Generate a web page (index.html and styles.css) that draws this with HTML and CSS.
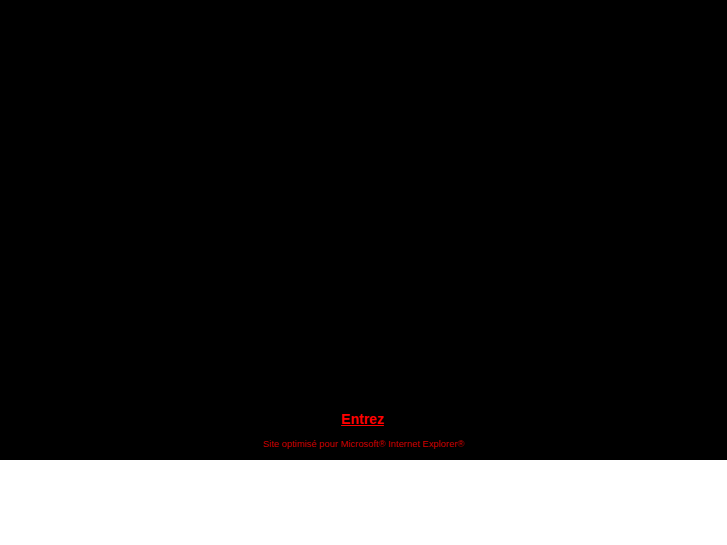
FILE: index.html
```html
<!DOCTYPE html>
<html lang="fr">
<head>
<meta charset="utf-8">
<title>Entrez</title>
<link rel="stylesheet" href="styles.css">
</head>
<body>
<div class="stage">
  <a class="enter" href="#">Entrez</a>
  <p class="note">Site optimisé pour Microsoft® Internet Explorer®</p>
</div>
</body>
</html>
```
FILE: styles.css
```css
html, body {
  margin: 0;
  padding: 0;
  background: #ffffff;
  font-family: "Liberation Sans", Arial, sans-serif;
}
.stage {
  height: 460px;
  background: #000000;
  display: flex;
  flex-direction: column;
  align-items: center;
  justify-content: flex-end;
  padding-bottom: 10px;
  box-sizing: border-box;
}
.enter {
  display: block;
  font-size: 14px;
  line-height: 16px;
  font-weight: bold;
  color: #ff0000;
  text-decoration: underline;
  margin-right: 2px;
}
.note {
  margin: 11px 0 0 0;
  font-size: 9.4px;
  line-height: 12px;
  color: #cc0000;
}
```
